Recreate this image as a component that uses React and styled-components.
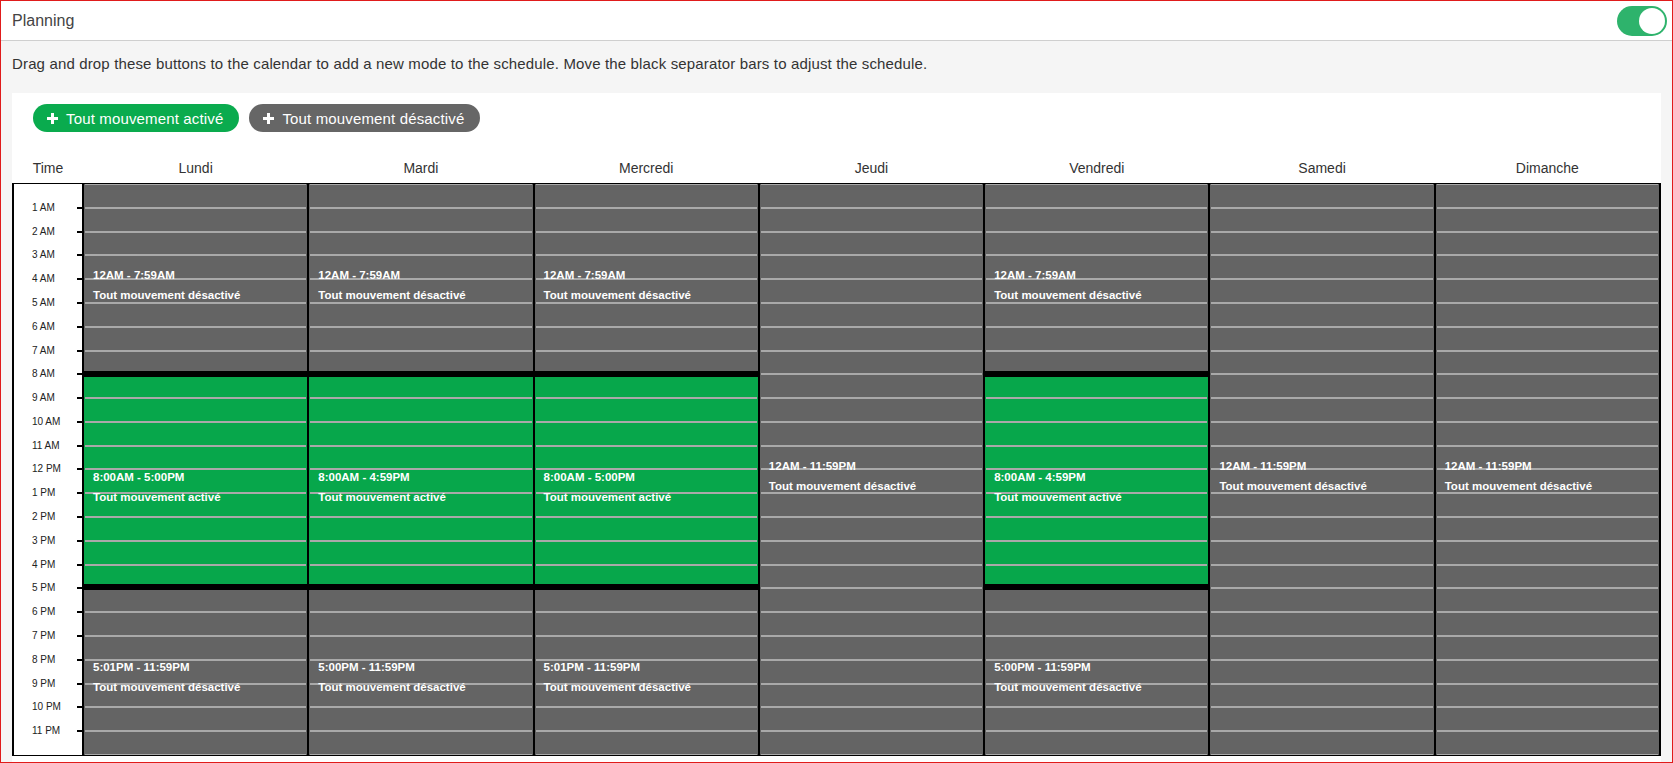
import React from "react";
import styled, { createGlobalStyle } from "styled-components";

const GlobalStyle = createGlobalStyle`
  * { box-sizing: border-box; }
  body {
    margin: 0;
    font-family: "Liberation Sans", Arial, sans-serif;
    background: #f5f5f5;
  }
`;

const Page = styled.div`
  height: 763px;
  border: 1px solid #e01b1b;
  background: #f5f5f5;
  display: flex;
  flex-direction: column;
`;

const Header = styled.div`
  height: 40px;
  flex: none;
  background: #fff;
  border-bottom: 1px solid #cfcfcf;
  display: flex;
  align-items: center;
  justify-content: space-between;
  padding: 0 5px 0 11px;
  h1 {
    margin: 0;
    font-size: 16px;
    font-weight: 400;
    color: #444;
  }
`;

const Toggle = styled.div`
  width: 50px;
  height: 30px;
  border-radius: 15px;
  background: #2eb36c;
  display: flex;
  align-items: center;
  justify-content: flex-end;
  padding: 2px;
  &::after {
    content: "";
    width: 26px;
    height: 26px;
    border-radius: 50%;
    background: #fff;
  }
`;

const Description = styled.p`
  margin: 0;
  flex: none;
  padding: 14px 11px 20px;
  line-height: 18px;
  font-size: 15px;
  letter-spacing: 0.15px;
  color: #333;
`;

const Panel = styled.div`
  flex: 1;
  margin: 0 11px;
  background: #fff;
  display: flex;
  flex-direction: column;
`;

const ButtonRow = styled.div`
  display: flex;
  gap: 10px;
  padding: 11px 0 0 21px;
`;

const ModeButton = styled.button`
  height: 28px;
  border: none;
  border-radius: 14px;
  padding: 0 16px 0 14px;
  display: flex;
  align-items: center;
  gap: 8px;
  font-family: inherit;
  font-size: 15px;
  letter-spacing: 0.15px;
  color: #fff;
  background: ${(p) => (p.$active ? "#0aab4e" : "#666666")};
`;

const Columns = styled.div`
  display: grid;
  grid-template-columns: 68px repeat(7, 1fr);
  column-gap: 2px;
`;

const HeadRow = styled(Columns)`
  margin-top: 21px;
  height: 30px;
  padding: 0 2px;
`;

const HeadCell = styled.div`
  display: flex;
  align-items: center;
  justify-content: center;
  font-size: 14px;
  color: #333;
`;

const Body = styled(Columns)`
  height: 573px;
  background: #000;
  border: 2px solid #000;
  border-top-width: 1px;
  border-bottom-width: 1px;
`;

const TimeCol = styled.div`
  background: #fff;
  display: grid;
  grid-template-rows: repeat(24, 1fr);
`;

const HourRow = styled.div`
  display: flex;
  align-items: flex-start;
  padding-left: 18px;
`;

const HourLabel = styled.span`
  font-size: 10px;
  line-height: 12px;
  color: #222;
  transform: translateY(-50%);
`;

const Tick = styled.span`
  margin-left: auto;
  width: 5px;
  height: 2px;
  background: #000;
  transform: translateY(-50%);
`;

const DayCol = styled.div`
  position: relative;
  display: flex;
  flex-direction: column;
  &::after {
    content: "";
    position: absolute;
    inset: 0 1px;
    z-index: 1;
    pointer-events: none;
    background: repeating-linear-gradient(
      to bottom,
      #a9a9a9 0,
      #a9a9a9 1px,
      transparent 1px,
      transparent calc(100% / 24 - 1px),
      #a9a9a9 calc(100% / 24 - 1px),
      #a9a9a9 calc(100% / 24)
    );
  }
`;

const Block = styled.div`
  position: relative;
  min-height: 0;
  background: ${(p) => (p.$active ? "#07a74b" : "#646464")};
  display: flex;
  flex-direction: column;
  justify-content: center;
  padding: 12px 0 0 9px;
  color: #fff;
  font-weight: 700;
  font-size: 11.5px;
  line-height: 20px;
  &::before {
    content: "";
    display: ${(p) => (p.$sep ? "block" : "none")};
    position: absolute;
    left: 0;
    right: 0;
    top: -3px;
    height: 6px;
    background: #000;
    z-index: 2;
  }
  span {
    position: relative;
    z-index: 3;
    white-space: nowrap;
  }
`;

const PlusIcon = () => (
  <svg width="11" height="11" viewBox="0 0 11 11">
    <path d="M4 0h3v4h4v3H7v4H4V7H0V4h4z" fill="#fff" />
  </svg>
);

const OFF = "Tout mouvement désactivé";
const ON = "Tout mouvement activé";

const weekA = [
  { from: 0, to: 480, on: false, label: "12AM - 7:59AM" },
  { from: 480, to: 1020, on: true, label: "8:00AM - 5:00PM" },
  { from: 1020, to: 1440, on: false, label: "5:01PM - 11:59PM" },
];
const weekB = [
  { from: 0, to: 480, on: false, label: "12AM - 7:59AM" },
  { from: 480, to: 1020, on: true, label: "8:00AM - 4:59PM" },
  { from: 1020, to: 1440, on: false, label: "5:00PM - 11:59PM" },
];
const fullOff = [{ from: 0, to: 1440, on: false, label: "12AM - 11:59PM" }];

const days = [
  { name: "Lundi", slots: weekA },
  { name: "Mardi", slots: weekB },
  { name: "Mercredi", slots: weekA },
  { name: "Jeudi", slots: fullOff },
  { name: "Vendredi", slots: weekB },
  { name: "Samedi", slots: fullOff },
  { name: "Dimanche", slots: fullOff },
];

const hourName = (h) => {
  if (h === 12) return "12 PM";
  return h < 12 ? `${h} AM` : `${h - 12} PM`;
};

const App = () => {
  const hours = Array.from({ length: 24 }, (_, i) => i);
  return (
    <Page>
      <GlobalStyle />
      <Header>
        <h1>Planning</h1>
        <Toggle />
      </Header>
      <Description>
        Drag and drop these buttons to the calendar to add a new mode to the
        schedule. Move the black separator bars to adjust the schedule.
      </Description>
      <Panel>
        <ButtonRow>
          <ModeButton $active>
            <PlusIcon />
            {ON}
          </ModeButton>
          <ModeButton>
            <PlusIcon />
            {OFF}
          </ModeButton>
        </ButtonRow>
        <HeadRow>
          <HeadCell>Time</HeadCell>
          {days.map((d) => (
            <HeadCell key={d.name}>{d.name}</HeadCell>
          ))}
        </HeadRow>
        <Body>
          <TimeCol>
            {hours.map((h) => (
              <HourRow key={h}>
                {h > 0 && (
                  <>
                    <HourLabel>{hourName(h)}</HourLabel>
                    <Tick />
                  </>
                )}
              </HourRow>
            ))}
          </TimeCol>
          {days.map((d) => (
            <DayCol key={d.name}>
              {d.slots.map((s, i) => (
                <Block
                  key={i}
                  $active={s.on}
                  $sep={i > 0}
                  style={{ flex: `${s.to - s.from} 1 0` }}
                >
                  <span>{s.label}</span>
                  <span>{s.on ? ON : OFF}</span>
                </Block>
              ))}
            </DayCol>
          ))}
        </Body>
      </Panel>
    </Page>
  );
};

export default App;
